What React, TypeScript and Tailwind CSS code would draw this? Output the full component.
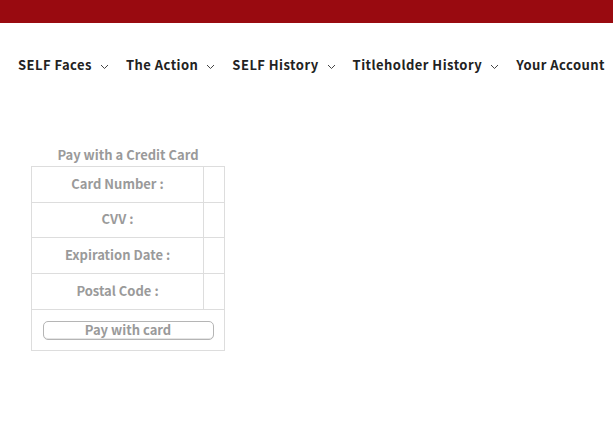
import React from "react";

const Chevron = () => (
  <svg width="9" height="6" viewBox="0 0 9 6" fill="none" className="shrink-0 mt-[3px]">
    <path d="M1 1L4.5 4.5L8 1" stroke="#444" strokeWidth="1" />
  </svg>
);

const items = ["SELF Faces", "The Action", "SELF History", "Titleholder History"];

export default function App() {
  return (
    <div className="w-[613px] h-[426px] bg-white overflow-hidden" style={{ fontFamily: '"Noto Sans CJK JP", "Noto Sans", sans-serif' }}>
      <div className="h-[23px] bg-[#990a10]" />
      <nav className="flex items-center h-[38px] mt-[23px] ml-[-9px] whitespace-nowrap text-[13px] font-bold tracking-[0.035em] text-[#222]">
        <span className="mr-[18px]"><Chevron /></span>
        {items.map((t) => (
          <span key={t} className="flex items-center gap-[8px] mr-[17px]">
            {t}
            <Chevron />
          </span>
        ))}
        <span>Your Account</span>
      </nav>
      <div className="mt-[63px] ml-[31px] w-[194px] text-[#9a9a9a] font-bold text-[13px]">
        <div className="text-center h-[19px] leading-[15px]">Pay with a Credit Card</div>
        <table className="w-[194px] border-collapse border border-[#dddddd]">
          <tbody>
            {["Card Number :", "CVV :", "Expiration Date :", "Postal Code :"].map((l, i) => (
              <tr key={l} className={i === 1 ? "h-[35px]" : "h-[36px]"}>
                <td className="border border-[#dddddd] text-center w-[172px] p-0 pb-[2px]">{l}</td>
                <td className="border border-[#dddddd] p-0" />
              </tr>
            ))}
            <tr className="h-[41px]">
              <td colSpan={2} className="border border-[#dddddd] p-0">
                <div className="flex justify-center">
                  <button className="w-[171px] h-[19px] rounded-[5px] border border-[#b5b5b5] text-[#9a9a9a] text-[13px] font-bold leading-[16px] bg-white shadow-[inset_0_-1px_0_#e5e5e5]">
                    Pay with card
                  </button>
                </div>
              </td>
            </tr>
          </tbody>
        </table>
      </div>
    </div>
  );
}
